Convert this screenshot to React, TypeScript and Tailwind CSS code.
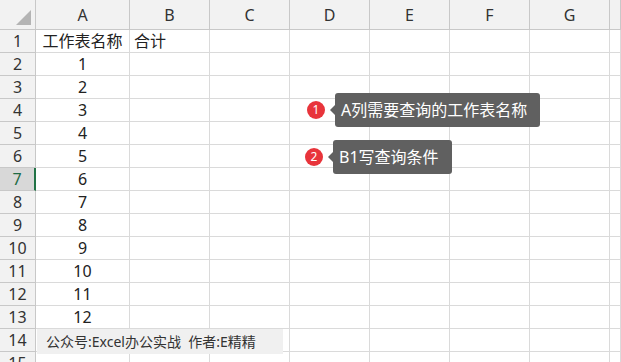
import React from "react";

const cols = ["A", "B", "C", "D", "E", "F", "G", ""];
const rows = Array.from({ length: 15 }, (_, i) => i + 1);

function cellText(row: number, col: number) {
    if (col === 0) {
        if (row === 1) return "工作表名称";
        if (row >= 2 && row <= 13) return String(row - 1);
    }
    if (col === 1 && row === 1) return "合计";
    return "";
}

function Callout({ num, text, className }: { num: number; text: string; className: string }) {
    return (
        <div className={`absolute flex items-center ${className}`}>
            <div className="w-[18px] h-[18px] rounded-full bg-[#e8343b] text-white text-[12px] flex items-center justify-center leading-none">{num}</div>
            <div className="relative ml-[10px] h-[34px] pl-[6px] pr-[13px] rounded-[3px] bg-[#606060] text-white text-[16px] flex items-center">
                <div className="absolute left-[-5px] top-1/2 -translate-y-1/2 w-0 h-0 border-y-[5px] border-y-transparent border-r-[5px] border-r-[#606060]" />
                {text}
            </div>
        </div>
    );
}

export default function App() {
    return (
        <div
            className="relative w-[621px] h-[362px] overflow-hidden bg-white text-[#222]"
            style={{ fontFamily: '"Noto Sans", "Noto Sans CJK SC", sans-serif' }}
        >
            <div className="grid grid-cols-[36px_94px_80px_80px_80px_80px_80px_80px_1fr] grid-rows-[30px_repeat(15,23px)]">
                {/* corner */}
                <div className="relative bg-[#f2f2f2] border-r border-b border-[#c8c8c8]">
                    <div className="absolute right-[4px] bottom-[4px] w-0 h-0 border-l-[15px] border-l-transparent border-b-[15px] border-b-[#b4b4b4]" />
                </div>
                {cols.map((c, i) => (
                    <div key={c + i} className="bg-[#f2f2f2] border-r border-b border-[#c8c8c8] flex items-center justify-center text-[16px] text-[#333]">
                        {c}
                    </div>
                ))}

                {rows.map((r) => (
                    <React.Fragment key={r}>
                        <div
                            className={
                                r === 7
                                    ? "bg-[#d8d8d8] border-r-2 border-r-[#217346] border-b border-b-[#c8c8c8] flex items-center justify-center text-[16px] text-[#1f6b45]"
                                    : "bg-[#f2f2f2] border-r border-b border-[#c8c8c8] flex items-center justify-center text-[16px] text-[#333]"
                            }
                        >
                            {r}
                        </div>
                        {cols.map((c, ci) => (
                            <div
                                key={c + ci}
                                className={`border-r border-b border-[#dadada] flex items-center text-[16px] whitespace-nowrap ${ci === 0 ? "justify-center" : "pl-[4px]"}`}
                            >
                                {cellText(r, ci)}
                            </div>
                        ))}
                    </React.Fragment>
                ))}
            </div>

            <Callout num={1} text="A列需要查询的工作表名称" className="left-[307px] top-[93px]" />
            <Callout num={2} text="B1写查询条件" className="left-[305px] top-[140px]" />

            <div className="absolute left-[37px] top-[329px] w-[246px] h-[25px] bg-[#f0f0f0] flex items-center pl-[9px] text-[14px] text-[#333] whitespace-pre">
                公众号:Excel办公实战  作者:E精精
            </div>
        </div>
    );
}
